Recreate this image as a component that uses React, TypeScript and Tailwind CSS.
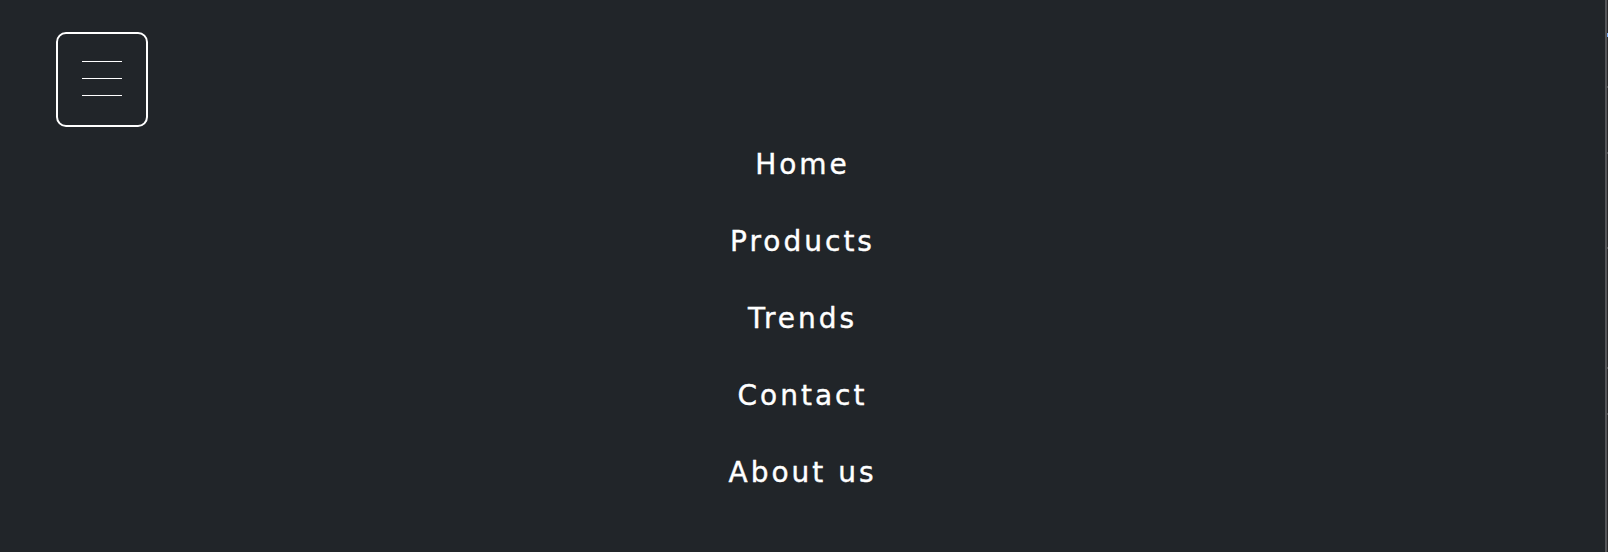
import React from 'react';

const LINKS = ['Home', 'Products', 'Trends', 'Contact', 'About us'];

// little marks on the edge strip at the far right
const EDGE_TICKS = [86, 152, 247, 367, 413];

export default function App() {
    return (
        <div className="flex h-[552px] w-full overflow-hidden bg-[#212529] font-['DejaVu_Sans',sans-serif]">
            <div className="flex flex-1 flex-col">
                <div className="pl-[56px] pt-[32px]">
                    <button
                        type="button"
                        aria-label="Toggle navigation"
                        className="flex h-[95px] w-[92px] flex-col items-center justify-center gap-4 rounded-[10px] border-2 border-white pb-[2px]"
                    >
                        <span className="h-px w-10 bg-white" />
                        <span className="h-px w-10 bg-white" />
                        <span className="h-px w-10 bg-white" />
                    </button>
                </div>

                <ul className="-mt-px flex flex-col items-center">
                    {LINKS.map(label => (
                        <li key={label} className="flex h-[77px] items-center">
                            <a href="#" className="text-[28px] leading-none tracking-[3px] text-white [-webkit-text-stroke:0.4px_white]">
                                {label}
                            </a>
                        </li>
                    ))}
                </ul>
            </div>

            <div className="relative flex">
                <div className="w-[2px] bg-[#555659]" />
                <div className="relative w-[1px] bg-[#2b2b2d]">
                    <div className="absolute left-0 top-[33px] h-[4px] w-[1px] bg-[#7aa7f0]" />
                    {EDGE_TICKS.map(y => (
                        <div key={y} className="absolute left-0 h-[2px] w-[1px] bg-[#555659]" style={{ top: y }} />
                    ))}
                </div>
            </div>
        </div>
    );
}
